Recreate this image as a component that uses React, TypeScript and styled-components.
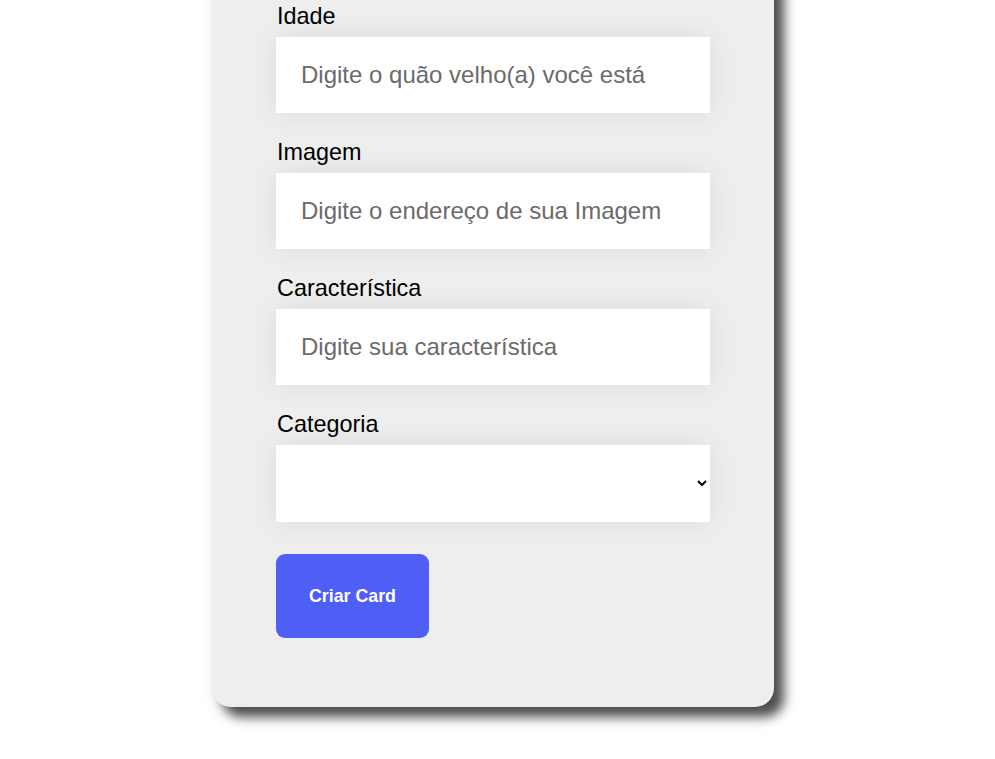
import React from "react";
import styled, { createGlobalStyle } from "styled-components";

const Global = createGlobalStyle`
  html, body { margin: 0; padding: 0; background: #ffffff; overflow: hidden; }
  body { font-family: "Liberation Sans", Arial, Helvetica, sans-serif; }
  * { box-sizing: border-box; }
`;

const Page = styled.div`
  display: flex;
  justify-content: center;
  padding-right: 9px;
  padding-bottom: 60px;
`;

const Card = styled.form`
  width: 562px;
  margin-top: -40px;
  padding: 43.5px 64px 69px;
  background: #eeeeee;
  border-radius: 19px;
  box-shadow: 10px 10px 12px rgba(0, 0, 0, 0.7), 0 0 20px rgba(0, 0, 0, 0.06);
  display: flex;
  flex-direction: column;
`;

const Field = styled.div<{ $last?: boolean }>`
  display: flex;
  flex-direction: column;
  margin-bottom: ${(p) => (p.$last ? "32px" : "26.5px")};
`;

const Label = styled.label`
  font-size: 23.4px;
  line-height: 25px;
  color: #000;
  margin-bottom: 8.5px;
  padding-left: 1px;
`;

const Input = styled.input`
  height: 76px;
  width: 100%;
  border: none;
  outline: none;
  background: #fff;
  padding: 0 24px 0 25px;
  font-family: "Liberation Sans", Arial, sans-serif;
  font-size: 24px;
  color: #222;
  box-shadow: 0 0 30px rgba(0, 0, 0, 0.08);
  &::placeholder { color: #6b6b6b; }
`;

const Select = styled.select`
  height: 77px;
  width: 100%;
  border: none;
  outline: none;
  background: #fff;
  padding: 0 6px 0 24px;
  font-family: "Liberation Sans", Arial, sans-serif;
  font-size: 24px;
  color: #000;
  box-shadow: 0 0 30px rgba(0, 0, 0, 0.08);
`;

const Button = styled.button`
  align-self: flex-start;
  width: 153px;
  height: 84px;
  border: none;
  border-radius: 9px;
  background: #4f5ef6;
  color: #fff;
  font-family: "Liberation Sans", Arial, sans-serif;
  font-weight: 700;
  font-size: 17.8px;
  cursor: pointer;
`;

export default function App() {
  return (
    <>
      <Global />
      <Page>
        <Card onSubmit={(e) => e.preventDefault()}>
          <Field>
            <Label>Idade</Label>
            <Input placeholder="Digite o quão velho(a) você está" />
          </Field>
          <Field>
            <Label>Imagem</Label>
            <Input placeholder="Digite o endereço de sua Imagem" />
          </Field>
          <Field>
            <Label>Característica</Label>
            <Input placeholder="Digite sua característica" />
          </Field>
          <Field $last>
            <Label>Categoria</Label>
            <Select defaultValue="">
              <option value=""></option>
              <option value="a">Categoria A</option>
            </Select>
          </Field>
          <Button type="submit">Criar Card</Button>
        </Card>
      </Page>
    </>
  );
}
